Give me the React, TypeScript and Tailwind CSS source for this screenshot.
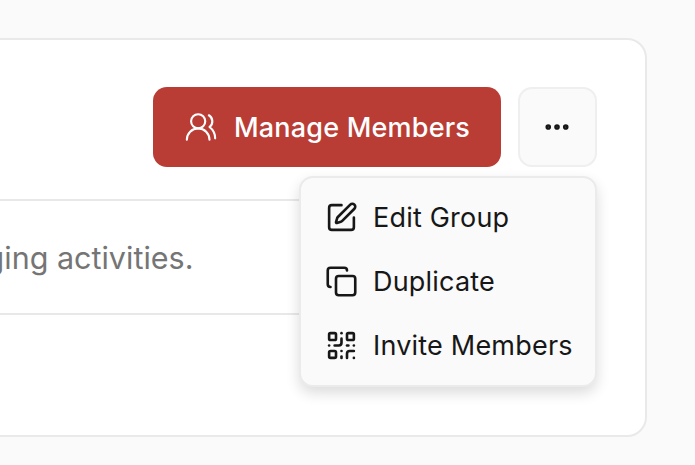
import React from 'react';
import { UsersRound, Ellipsis, SquarePen, Copy, QrCode } from 'lucide-react';

const menuItems = [
  { label: 'Edit Group', icon: SquarePen },
  { label: 'Duplicate', icon: Copy },
  { label: 'Invite Members', icon: QrCode },
];

export default function App() {
  return (
    <div className="w-[695px] h-[465px] overflow-hidden bg-[#fafafa] pt-[38px] font-['Inter',sans-serif]">
      {/* Card runs off the left edge */}
      <div className="relative ml-[-60px] w-[707px] h-[399px] bg-white border-2 border-[#e9e9e9] rounded-[20px] pt-[47px] pr-[48px]">
        <div className="flex justify-end gap-[17px]">
          <button className="w-[348px] h-[80px] bg-[#b93d35] rounded-[14px] flex items-center justify-center gap-[16px] text-white text-[27px] tracking-[0.2px] font-medium">
            <UsersRound size={34} strokeWidth={1.5} />
            <span className="pt-[2px]">Manage Members</span>
          </button>
          <button className="w-[79px] h-[80px] bg-[#fafafa] border-2 border-[#efefef] rounded-[14px] flex items-center justify-center pr-[1px] text-[#171717]">
            <Ellipsis size={30} strokeWidth={2.5} />
          </button>
        </div>

        {/* Description row */}
        <div className="mt-[32px] h-[116px] border-y-2 border-[#e8e8e8] flex items-center justify-start pl-[60px]">
          <span className="ml-[-228px] pt-[2px] whitespace-nowrap text-[30.5px] text-[#757575]">Used for managing activities.</span>
        </div>

        {/* Dropdown menu */}
        <div className="absolute top-[136px] right-[48px] w-[298px] h-[211px] bg-[#fafafa] border-2 border-[#ebebeb] rounded-[14px] shadow-[0_6px_14px_rgba(0,0,0,0.14)] flex flex-col justify-center">
          {menuItems.map((item) => {
            const Icon = item.icon;
            return (
              <div key={item.label} className="h-[64px] flex items-center gap-[15px] pl-[24px] text-[27px] tracking-[0.2px] text-[#171717]">
                <Icon size={33} strokeWidth={1.9} />
                <span className="pt-[2px]">{item.label}</span>
              </div>
            );
          })}
        </div>
      </div>
    </div>
  );
}
